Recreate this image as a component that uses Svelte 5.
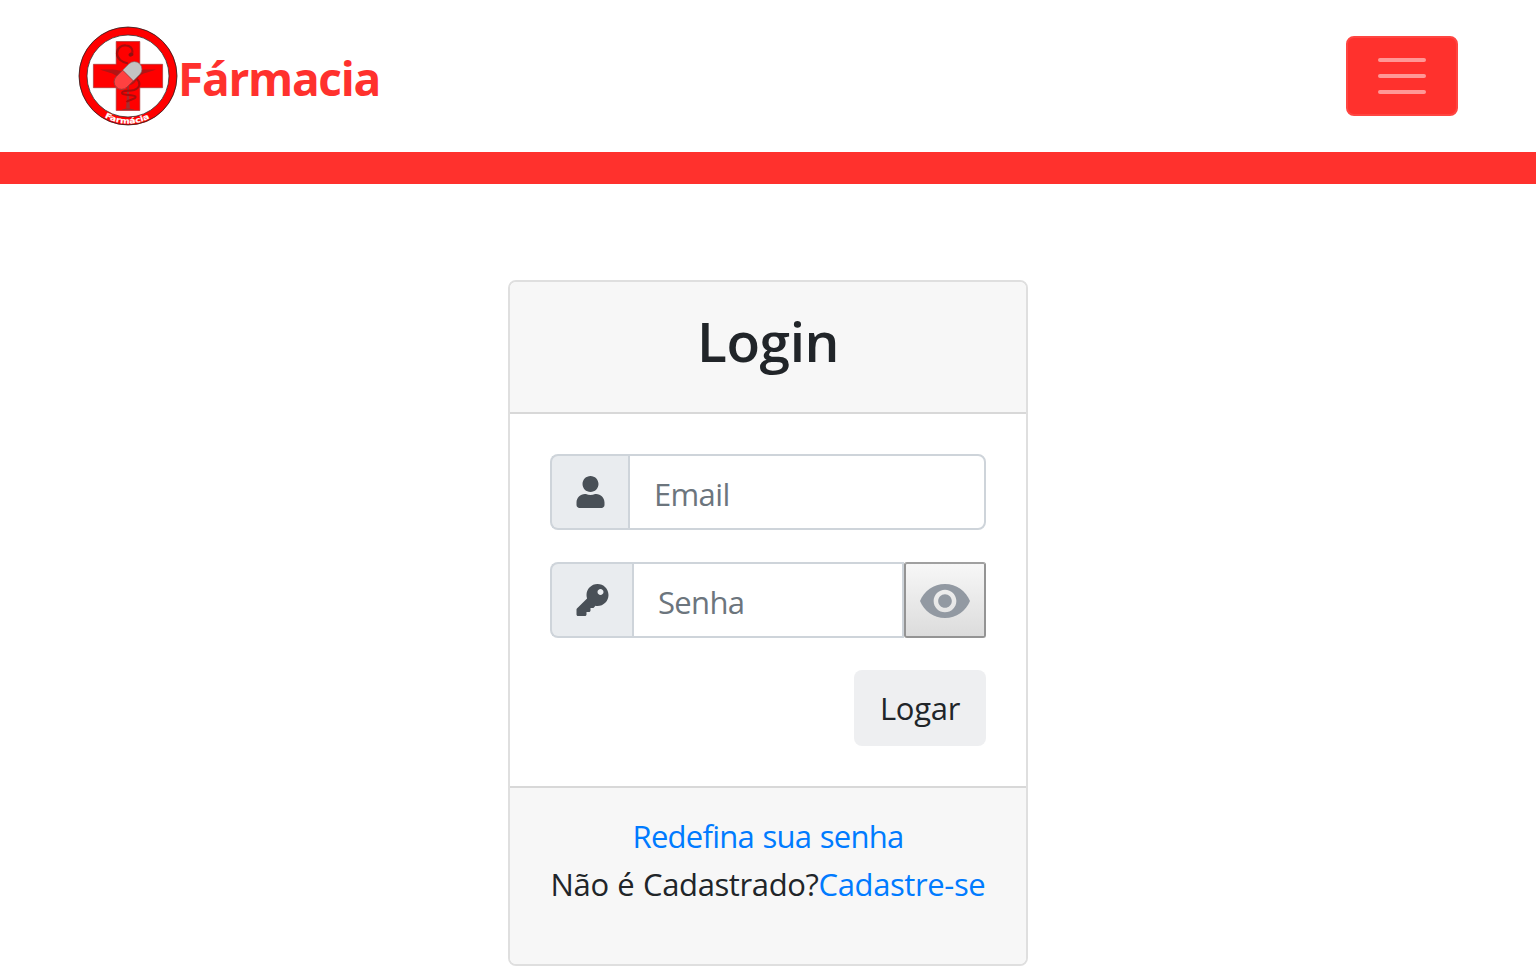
<script>
  let email = $state('');
  let password = $state('');
  let visible = $state(false);
</script>

<header>
  <a class="brand" href="#home">
    <svg class="logo" viewBox="0 0 100 100" role="img" aria-label="Logo">
      <circle cx="50" cy="50" r="45" fill="#fff" stroke="#f00" stroke-width="8" />
      <circle cx="50" cy="50" r="49" fill="none" stroke="#222" stroke-width=".8" />
      <circle cx="50" cy="50" r="41" fill="none" stroke="#333" stroke-width=".8" />
      <path d="M38.2 15.5h23.6v22.8h22.8v23.4H61.8v22.8H38.2V61.7H15.4V38.3h22.8z" fill="#f00" stroke="#a33" stroke-width=".7" />
      <path d="M22 43.500h12c4 0 10 2 16 2s12-2 16-2h12c-7 3-13 3-17 7-3 5-6 9-11 9s-8-4-11-9c-4-4-10-4-17-7z" fill="#b31313" />
      <path d="M50 58l-1.300 24h2.600z" fill="#a03030" stroke="#a03030" stroke-width="1" />
      <path d="M43.500 84c3-2 10-2 13 0z" fill="#9a2a2a" />
      <path d="M50 37.500c-6-1-11-5-11-10 0-6 5-8.500 9-8 4 0 7 3 6.500 7" fill="none" stroke="#a80c0c" stroke-width="2.200" />
      <ellipse cx="53" cy="28.500" rx="2.600" ry="2" transform="rotate(-25 53 28.500)" fill="#8f1010" />
      <path d="M59 53c4 4 3 9-3 11-5 1.500-12 0-12 3 0 3 11 1 13.500 3.500 1 3-7 3-9 5.500" fill="none" stroke="#a80c0c" stroke-width="2" />
      <g transform="rotate(-45 50 49.5)">
        <rect x="33.500" y="42" width="33" height="15" rx="7.500" fill="#c3c3c3" stroke="#777" stroke-width=".6" />
        <path d="M50 42h-9a7.500 7.500 0 0 0 0 15h9z" fill="#ff4141" stroke="#8b2020" stroke-width=".6" />
      </g>
      <path id="logo-arc" d="M26.500 91.200A47.500 47.500 0 0 0 73.800 91.200" fill="none" />
      <text class="seal"><textPath href="#logo-arc" textLength="47" lengthAdjust="spacingAndGlyphs">Farmácia</textPath></text>
    </svg>
    <span>Fármacia</span>
  </a>
  <button class="toggler" aria-label="Menu">
    <svg viewBox="0 0 30 30"><path stroke="rgba(255,255,255,.5)" stroke-linecap="round" stroke-width="2" d="M4 7h22M4 15h22M4 23h22" /></svg>
  </button>
</header>
<div class="band"></div>

<main>
  <section class="card">
    <div class="head"><h3>Login</h3></div>
    <form class="body" onsubmit={(e) => e.preventDefault()}>
      <div class="group">
        <span class="addon">
          <svg width="28" height="32" viewBox="-8 0 448 512"><path fill="currentColor" d="M224 256c70.7 0 128-57.3 128-128S294.7 0 224 0 96 57.3 96 128s57.3 128 128 128zm89.6 32h-16.7c-22.2 10.2-46.9 16-72.9 16s-50.6-5.8-72.9-16h-16.7C60.2 288 0 348.2 0 422.4V464c0 26.5 21.5 48 48 48h352c26.5 0 48-21.5 48-48v-41.6c0-74.2-60.2-134.4-134.4-134.4z" /></svg>
        </span>
        <input class="last" type="text" placeholder="Email" bind:value={email} />
      </div>
      <div class="group">
        <span class="addon">
          <svg width="32" height="32" viewBox="-8 0 512 512"><path fill="currentColor" d="M512 176.001C512 273.203 433.202 352 336 352c-11.22 0-22.19-1.062-32.827-3.069l-24.012 27.014A23.999 23.999 0 0 1 261.223 384H224v40c0 13.255-10.745 24-24 24h-40v40c0 13.255-10.745 24-24 24H24c-13.255 0-24-10.745-24-24v-78.059c0-6.365 2.529-12.47 7.029-16.971l161.802-161.802C163.108 213.814 160 195.271 160 176 160 78.798 238.797.001 335.999 0 433.488-.001 512 78.511 512 176.001zM336 128c0 26.51 21.49 48 48 48s48-21.49 48-48-21.49-48-48-48-48 21.49-48 48z" /></svg>
        </span>
        <input type={visible ? 'text' : 'password'} placeholder="Senha" bind:value={password} />
        <button class="eye" type="button" aria-label="Mostrar senha" onclick={() => (visible = !visible)}>
          <svg width="50" height="34" viewBox="1 4.5 22 15" preserveAspectRatio="none"><path fill="#9299a2" d="M12 4.5C7 4.5 2.73 7.61 1 12c1.73 4.39 6 7.5 11 7.5s9.270-3.110 11-7.500c-1.730-4.390-6-7.500-11-7.500zM12 17c-2.760 0-5-2.240-5-5s2.240-5 5-5 5 2.240 5 5-2.240 5-5 5zm0-8c-1.660 0-3 1.340-3 3s1.340 3 3 3 3-1.340 3-3-1.340-3-3-3z" /></svg>
        </button>
      </div>
      <button class="submit" type="submit">Logar</button>
    </form>
    <div class="foot">
      <div><a class="reset" href="#redefinir">Redefina sua senha</a></div>
      <div class="signup"><span>Não é Cadastrado?</span><a href="#cadastro">Cadastre-se</a></div>
    </div>
  </section>
</main>

<style>
  :global(body) {
    margin: 0;
    background: #fff;
    color: #212529;
    font: 31px/48px "Open Sans", sans-serif;
    overflow: hidden;
  }
  :global(*) { box-sizing: border-box; }
  a { color: #007bff; text-decoration: none; }
  button, input { font: inherit; margin: 0; }
  svg { display: block; }
  header {
    height: 152px;
    padding: 0 78px;
    display: flex;
    align-items: center;
    justify-content: space-between;
  }
  .brand { display: flex; align-items: center; color: #ff312d; font-size: 46px; font-weight: 700; letter-spacing: -1.3px; }
  .brand span { padding-top: 4px; }
  .logo { width: 100px; height: 100px; }
  .seal { font: 700 7.5px "DejaVu Sans", sans-serif; fill: #fff; stroke: #fff; stroke-width: .2; letter-spacing: 0; }
  .toggler {
    width: 112px;
    height: 80px;
    display: grid;
    place-items: center;
    padding: 0;
    background: #ff312d;
    border: 2px solid #ff4541;
    border-radius: 8px;
  }
  .toggler svg { width: 60px; height: 60px; }
  .band { height: 32px; background: #ff312d; }
  main { padding-top: 96px; display: flex; justify-content: center; }
  .card {
    width: 520px;
    height: 686px;
    border: 2px solid #dfdfdf;
    border-radius: 8px;
    overflow: hidden;
    display: flex;
    flex-direction: column;
  }
  .head { height: 132px; background: #f7f7f7; border-bottom: 2px solid #d8d8d8; padding-top: 23px; text-align: center; }
  h3 { margin: 0; font-size: 55px; line-height: 72px; font-weight: 600; letter-spacing: -0.4px; }
  .body { height: 372px; padding: 40px; display: flex; flex-direction: column; gap: 32px; }
  .group { height: 76px; display: flex; }
  .addon {
    padding: 0 24px;
    display: flex;
    align-items: center;
    color: #495057;
    background: #e9ecef;
    border: 2px solid #ced4da;
    border-right: 0;
    border-radius: 8px 0 0 8px;
  }
  .addon svg { overflow: visible; }
  input {
    flex: 1;
    min-width: 0;
    padding: 4px 24px 0;
    border: 2px solid #ced4da;
    border-radius: 0;
    background: #fff;
    outline: 0;
    letter-spacing: -0.65px;
  }
  input::placeholder { color: #6c757d; opacity: 1; }
  .last { border-radius: 0 8px 8px 0; }
  .eye {
    width: 82px;
    padding: 2px 0 0;
    display: grid;
    place-items: center;
    background: linear-gradient(#f7f7f7, #dcdcdc);
    border: 2px solid #949494;
    border-top-color: #a0a0a0;
    border-radius: 3px;
  }
  .submit {
    width: 132px;
    height: 76px;
    align-self: flex-end;
    padding: 0;
    color: #212529;
    background: #eeeff1;
    border: 0;
    border-radius: 8px;
    letter-spacing: -0.3px;
  }
  .foot { flex: 1; background: #f7f7f7; border-top: 2px solid #d8d8d8; padding-top: 24px; text-align: center; white-space: nowrap; }
  .reset { letter-spacing: -0.75px; word-spacing: 1.2px; }
  .signup { letter-spacing: -0.38px; word-spacing: 1px; }
</style>
